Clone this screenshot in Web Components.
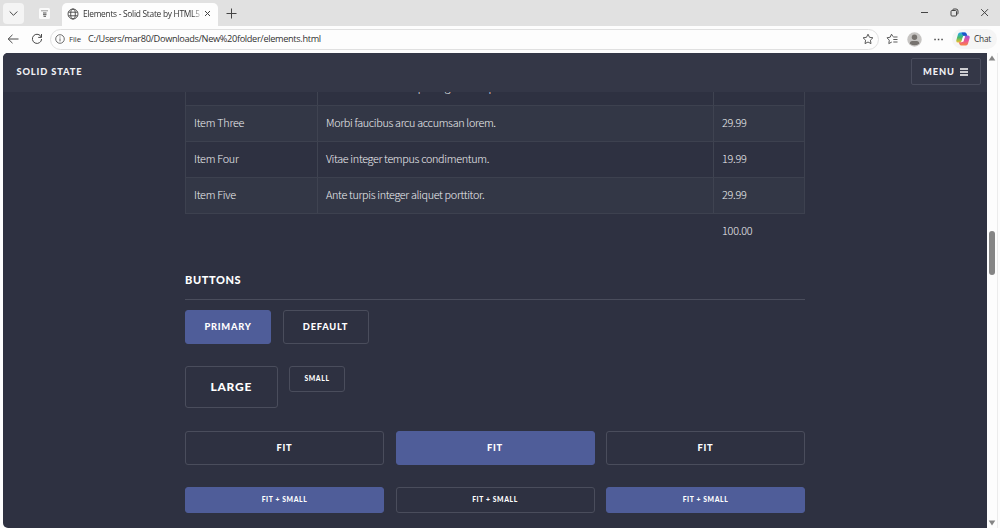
<!DOCTYPE html>
<html lang="en">
<head>
<meta charset="utf-8">
<title>Elements - Solid State by HTML5 UP</title>
<style>
  html, body {
    margin: 0;
    height: 100%;
    overflow: hidden;
    background: #fdfdfd;
  }
  :root {
    --color-page: #2e3141;
    --color-row: #333746;
    --color-border: #4a4d5c;
    --color-accent: #4f5d99;
    --font-ui: "Open Sans", "Noto Sans", sans-serif;
    --font-body: "Noto Sans CJK JP", "Noto Sans", sans-serif;
    --font-heading: Lato, "Open Sans", sans-serif;
  }
</style>
</head>
<body>
<browser-window>
  <browser-tabs slot="tabs">Elements - Solid State by HTML5 UP</browser-tabs>
  <browser-toolbar slot="toolbar">C:/Users/mar80/Downloads/New%20folder/elements.html</browser-toolbar>

  <page-header slot="header">Solid State</page-header>

  <price-table total="100.00">
    <price-row name="Item Two" price="19.99">Vis ac commodo adipiscing arcu aliquet.</price-row>
    <price-row name="Item Three" price="29.99" odd>Morbi faucibus arcu accumsan lorem.</price-row>
    <price-row name="Item Four" price="19.99">Vitae integer tempus condimentum.</price-row>
    <price-row name="Item Five" price="29.99" odd>Ante turpis integer aliquet porttitor.</price-row>
  </price-table>

  <page-section heading="Buttons">
    <button-row>
      <ss-button primary style="width: 86px">Primary</ss-button>
      <ss-button style="width: 86px">Default</ss-button>
    </button-row>
    <button-row>
      <ss-button size="large" style="width: 92.5px">Large</ss-button>
      <ss-button size="small" style="width: 56px">Small</ss-button>
    </button-row>
    <button-row fit>
      <ss-button>Fit</ss-button>
      <ss-button primary>Fit</ss-button>
      <ss-button>Fit</ss-button>
    </button-row>
    <button-row fit>
      <ss-button size="small" primary>Fit + Small</ss-button>
      <ss-button size="small">Fit + Small</ss-button>
      <ss-button size="small" primary>Fit + Small</ss-button>
    </button-row>
  </page-section>
</browser-window>

<script>
class BaseElement extends HTMLElement {
  constructor() {
    super();
    this.attachShadow({ mode: "open" });
    this.shadowRoot.innerHTML = this.constructor.markup;
  }
}

class BrowserWindow extends BaseElement {
  static markup = `
    <style>
      :host {
        display: grid;
        grid-template-rows: 26px 26.5px 1fr;
        height: 528px;
      }
      .body {
        display: grid;
        grid-template-columns: 984px 11px;
        padding-left: 3px;
        min-height: 0;
      }
      .page {
        position: relative;
        overflow: hidden;
        background: var(--color-page);
        border-radius: 5px 0 0 5px;
      }
      .header {
        position: absolute;
        inset: 0 0 auto 0;
      }
      .content {
        width: 620px;
        margin: 17.5px 0 0 182px;
      }
    </style>
    <slot name="tabs"></slot>
    <slot name="toolbar"></slot>
    <div class="body">
      <div class="page">
        <div class="content"><slot></slot></div>
        <div class="header"><slot name="header"></slot></div>
      </div>
      <page-scrollbar></page-scrollbar>
    </div>
  `;
}

class BrowserTabs extends BaseElement {
  static markup = `
    <style>
      :host {
        display: flex;
        align-items: flex-start;
        background: #e1e1e1;
        font: 8.4px/21px var(--font-ui);
        color: #333;
      }
      svg {
        display: block;
        fill: none;
        stroke: #444;
      }
      .list {
        display: flex;
        align-items: center;
        justify-content: center;
        width: 21px;
        height: 21px;
        margin: 3px 0 0 3px;
        border-radius: 4px;
        background: #f4f4f4;
      }
      .pinned {
        margin: 8px 0 0 15px;
      }
      .tab {
        display: flex;
        align-items: center;
        box-sizing: border-box;
        width: 156px;
        height: 23px;
        margin: 3px 0 0 12px;
        padding: 0 6px 2px 5px;
        border-radius: 5px 5px 0 0;
        background: #fdfdfd;
      }
      .title {
        width: 120px;
        margin-left: 4px;
        overflow: hidden;
        white-space: nowrap;
        letter-spacing: -0.28px;
        -webkit-mask-image: linear-gradient(90deg, #000 109px, transparent 120px);
        mask-image: linear-gradient(90deg, #000 109px, transparent 120px);
      }
      .add {
        margin: 8px 0 0 8px;
      }
      .controls {
        display: flex;
        gap: 21px;
        margin: 8px 11px 0 auto;
      }
    </style>
    <div class="list"><svg width="9" height="9"><path d="M.7 2.5 4.5 6.3 8.3 2.5"/></svg></div>
    <svg class="pinned" width="11" height="11">
      <rect width="11" height="11" rx="1.5" fill="#fafafa" stroke="none"/>
      <path d="M2 2.8h7" stroke="#999"/>
      <path d="M4 5h3.5M4 6.7h3.5M4.5 8.3h2.5" stroke="#555"/>
    </svg>
    <div class="tab">
      <svg width="12" height="12" stroke-width=".9">
        <circle cx="6" cy="6" r="5"/><ellipse cx="6" cy="6" rx="2.3" ry="5"/><path d="M1.5 4.2h9M1.5 7.8h9"/>
      </svg>
      <span class="title"><slot></slot></span>
      <svg width="8" height="7"><path d="M2 1 7 6M7 1 2 6"/></svg>
    </div>
    <svg class="add" width="11" height="11"><path d="M5.5.5v10M.5 5.5h10"/></svg>
    <div class="controls">
      <svg width="9" height="9"><path d="M1 4.5h7"/></svg>
      <svg width="9" height="9"><rect x="1" y="2.5" width="5.5" height="5.5" rx="1"/><path d="M2.8 2.2V2q0-1 1-1H6q2 0 2 2v2.2q0 1-.8 1"/></svg>
      <svg width="9" height="9"><path d="M1.2 1.2 8 8M8 1.2 1.2 8"/></svg>
    </div>
  `;
}

class BrowserToolbar extends BaseElement {
  static markup = `
    <style>
      :host {
        display: flex;
        align-items: center;
        padding: 0 2px 0 7px;
        background: #fdfdfd;
        font: 9.2px/20px var(--font-ui);
        color: #333;
      }
      svg {
        display: block;
        flex: none;
        fill: none;
        stroke: #4a4a4a;
      }
      .reload {
        margin-left: 12px;
      }
      .address {
        display: flex;
        align-items: center;
        box-sizing: border-box;
        width: 829px;
        height: 21px;
        margin-left: 7px;
        padding: 0 4px;
        border: 1px solid #e0e0e0;
        border-radius: 11px;
      }
      .file {
        width: 15px;
        margin: 0 4px 0 4px;
        font-size: 7.8px;
        letter-spacing: -0.1px;
      }
      .url {
        margin-right: auto;
        white-space: nowrap;
        letter-spacing: -0.33px;
      }
      .fav {
        margin-left: 7px;
      }
      .user {
        margin-left: 9px;
      }
      .dots {
        margin-left: 12px;
      }
      .chat {
        display: flex;
        align-items: center;
        box-sizing: border-box;
        width: 45px;
        height: 20px;
        margin-left: 9px;
        padding-left: 4px;
        border-radius: 10px;
        background: #f5f5f5;
        font-size: 8.3px;
      }
      .chat span {
        margin-left: 4px;
        letter-spacing: -0.2px;
      }
    </style>
    <svg width="12" height="10"><path d="M11.5 5H1.2M5.5.8 1.2 5l4.3 4.2"/></svg>
    <svg class="reload" width="12" height="12"><path d="M10.3 4.2A4.6 4.6 0 1 0 10.6 6M10.5 1v3.4H7.2"/></svg>
    <div class="address">
      <svg width="10" height="10" stroke-width=".8"><circle cx="5" cy="5" r="4.3"/><path d="M5 4.4v3M5 2.5v1"/></svg>
      <span class="file">File</span>
      <span class="url"><slot></slot></span>
      <svg width="12" height="12" stroke-width=".9"><path d="m6 1.2 1.5 3.1 3.4.5-2.5 2.4.6 3.4-3-1.6-3 1.6.6-3.4L1.1 4.8l3.4-.5z" stroke-linejoin="round"/></svg>
    </div>
    <svg class="fav" width="12" height="12" stroke-width=".9"><path d="M7 3.6 5.5 1.2 4.2 4.2 1 4.8l2.3 2.4-.5 3.4 3-1.6M7.3 4h4.2M7.3 6.5h4.2M7.3 9h4.2" stroke-linejoin="round"/></svg>
    <svg class="user" width="15" height="15">
      <circle cx="7.5" cy="7.5" r="7.2" fill="#c6c4c2" stroke="none"/>
      <circle cx="7.5" cy="5.2" r="2.7" fill="#77736f" stroke="none"/>
      <path d="M2.8 11.8q0-2.8 2.5-2.8h4.4q2.5 0 2.5 2.8-4.7 3-9.4 0z" fill="#77736f" stroke="none"/>
    </svg>
    <svg class="dots" width="9" height="3"><path d="M.3 1.5h1.5M3.8 1.5h1.5M7.3 1.5h1.5" stroke-width="1.5"/></svg>
    <div class="chat">
      <svg width="14" height="14" viewBox="0 0 14 14">
        <defs>
          <linearGradient id="left" x2="0" y2="1"><stop stop-color="#28a8ee"/><stop offset=".5" stop-color="#46b96c"/><stop offset="1" stop-color="#f5c02e"/></linearGradient>
          <linearGradient id="right" x2="0" y2="1"><stop stop-color="#a057df"/><stop offset=".55" stop-color="#ec5791"/><stop offset="1" stop-color="#f78345"/></linearGradient>
        </defs>
        <g stroke="none">
          <path d="M4 .6h5q1.2 0 1.7 1.6l.5 1.6H8.5q-1.3 0-1.7 1.4L5.6 9q-.4 1.5-1.6 1.5H2Q-.2 10.500.4 8L2 2.200Q2.500.6 4 .6z" fill="url(#left)"/>
          <path d="M10 13.4H5q-1.2 0-1.7-1.6l-.5-1.600h2.700q1.300 0 1.700-1.400L8.400 5q.4-1.500 1.600-1.500h2q2.200 0 1.600 2.500L12 11.800q-.5 1.600-2 1.600z" fill="url(#right)"/>
          <path d="M5.5.6H9q1.2 0 1.7 1.6l.5 1.6H8.5L7 3.5z" fill="#1c55ca"/>
          <path d="M7.2 4.3h1.9l-1.7 5.4H5.5z" fill="#fff"/>
        </g>
      </svg>
      <span>Chat</span>
    </div>
  `;
}

class PageScrollbar extends BaseElement {
  static markup = `
    <style>
      :host {
        display: grid;
        grid-template-rows: 10px 1fr 10px;
        justify-items: center;
        box-sizing: border-box;
        border-right: 1px solid #ececec;
        background: #fdfdfd;
      }
      svg {
        align-self: center;
        fill: #858585;
      }
      .thumb {
        width: 5.5px;
        height: 44px;
        margin-top: 168.5px;
        border-radius: 3px;
        background: #858585;
      }
    </style>
    <svg width="8" height="6"><path d="M4 .5 7.3 5.5H.7z"/></svg>
    <div class="thumb"></div>
    <svg width="8" height="6"><path d="M4 5.5 7.3.5H.7z"/></svg>
  `;
}

class PageHeader extends BaseElement {
  static markup = `
    <style>
      :host {
        display: flex;
        align-items: center;
        justify-content: space-between;
        box-sizing: border-box;
        height: 39.5px;
        padding: 0 6px 1px 13.5px;
        background: #343747;
        font: 900 9.3px/12px var(--font-heading);
        letter-spacing: 0.85px;
        text-transform: uppercase;
        color: #f0f0f4;
      }
      .menu {
        display: flex;
        align-items: center;
        box-sizing: border-box;
        width: 70px;
        height: 27px;
        padding-left: 11px;
        border: 1px solid #4a4d5d;
        border-radius: 2px;
      }
      svg {
        margin-left: 5px;
      }
    </style>
    <span class="logo"><slot></slot></span>
    <div class="menu"><span>Menu</span><svg width="8" height="8"><path d="M0 1h8M0 4h8M0 7h8" stroke="#fff" stroke-width="1.6"/></svg></div>
  `;
}

class PriceTable extends BaseElement {
  static markup = `
    <style>
      :host {
        display: block;
        font: 300 10.8px/36px var(--font-body);
        letter-spacing: -0.33px;
        color: #eeeff2;
      }
      .total {
        height: 36px;
        padding-left: 537px;
        line-height: 33px;
        letter-spacing: -0.2px;
      }
    </style>
    <slot></slot>
    <div class="total"></div>
  `;

  connectedCallback() {
    this.shadowRoot.querySelector(".total").textContent = this.getAttribute("total");
  }
}

class PriceRow extends BaseElement {
  static markup = `
    <style>
      :host {
        display: grid;
        grid-template-columns: 131px 396px 91px;
        height: 36px;
        line-height: 33px;
        box-sizing: border-box;
        border: 1px solid #3d414f;
        border-top: 0;
      }
      :host([odd]) {
        background: var(--color-row);
      }
      div {
        padding-left: 8px;
        white-space: nowrap;
      }
      .name, .price {
        letter-spacing: -0.25px;
      }
      div + div {
        border-left: 1px solid #3f4351;
      }
    </style>
    <div class="name"></div>
    <div><slot></slot></div>
    <div class="price"></div>
  `;

  connectedCallback() {
    this.shadowRoot.querySelector(".name").textContent = this.getAttribute("name");
    this.shadowRoot.querySelector(".price").textContent = this.getAttribute("price");
  }
}

class PageSection extends BaseElement {
  static markup = `
    <style>
      :host {
        display: block;
        margin-top: 18.5px;
        font-family: var(--font-heading);
      }
      h3 {
        box-sizing: border-box;
        height: 31px;
        margin: 0 0 10px;
        padding-top: 3px;
        border-bottom: 1px solid var(--color-border);
        font-size: 11px;
        line-height: 16px;
        font-weight: 900;
        letter-spacing: 0.6px;
        text-transform: uppercase;
        color: #fff;
      }
    </style>
    <h3></h3>
    <slot></slot>
  `;

  connectedCallback() {
    this.shadowRoot.querySelector("h3").textContent = this.getAttribute("heading");
  }
}

class ButtonRow extends BaseElement {
  static markup = `
    <style>
      :host {
        display: flex;
        align-items: flex-start;
        gap: 11.5px;
        margin-bottom: 22.6px;
      }
      :host([fit]) ::slotted(*) {
        flex: 1;
      }
    </style>
    <slot></slot>
  `;
}

class SsButton extends BaseElement {
  static markup = `
    <style>
      :host {
        display: flex;
        align-items: center;
        justify-content: center;
        box-sizing: border-box;
        height: 34px;
        padding-bottom: 1px;
        border: 1px solid var(--color-border);
        border-radius: 3px;
        font-size: 9.3px;
        font-weight: 900;
        letter-spacing: 0.75px;
        text-transform: uppercase;
        white-space: nowrap;
        color: #fff;
      }
      :host([primary]) {
        border-color: var(--color-accent);
        background: var(--color-accent);
      }
      :host([size="large"]) {
        height: 42px;
        font-size: 12px;
      }
      :host([size="small"]) {
        height: 26px;
        padding-bottom: 2px;
        font-size: 6.8px;
        letter-spacing: 0.6px;
      }
    </style>
    <slot></slot>
  `;
}

customElements.define("page-scrollbar", PageScrollbar);
customElements.define("browser-window", BrowserWindow);
customElements.define("browser-tabs", BrowserTabs);
customElements.define("browser-toolbar", BrowserToolbar);
customElements.define("page-header", PageHeader);
customElements.define("price-table", PriceTable);
customElements.define("price-row", PriceRow);
customElements.define("page-section", PageSection);
customElements.define("button-row", ButtonRow);
customElements.define("ss-button", SsButton);
</script>
</body>
</html>
